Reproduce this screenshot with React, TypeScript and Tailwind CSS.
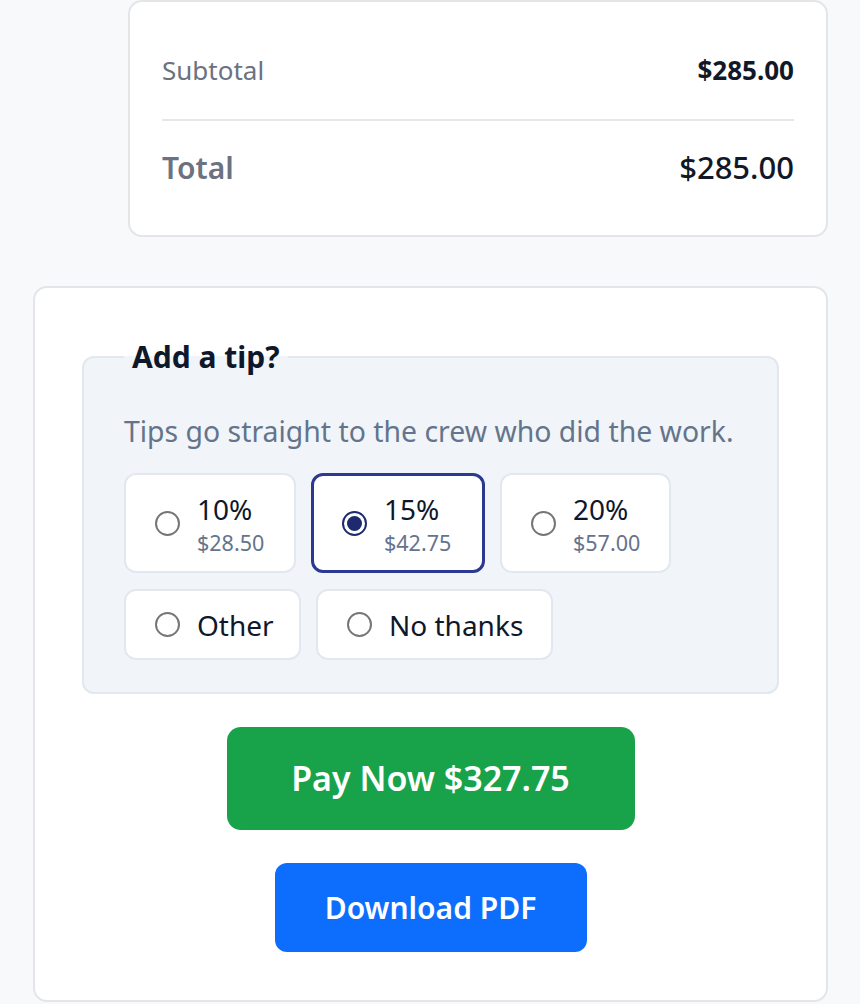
import React, { useState } from "react";

type Opt = { id: string; label: string; amount?: string; w: string; h: string };

const opts: Opt[] = [
  { id: "10", label: "10%", amount: "$28.50", w: "w-[172px]", h: "h-[100px]" },
  { id: "15", label: "15%", amount: "$42.75", w: "w-[174px]", h: "h-[100px]" },
  { id: "20", label: "20%", amount: "$57.00", w: "w-[171px]", h: "h-[100px]" },
  { id: "other", label: "Other", w: "w-[177px]", h: "h-[71px]" },
  { id: "none", label: "No thanks", w: "w-[237px]", h: "h-[71px]" },
];

function Radio({ checked }: { checked: boolean }) {
  return checked ? (
    <span className="flex h-[25px] w-[25px] shrink-0 items-center justify-center rounded-full border-2 border-[#1e2a6e] bg-white">
      <span className="h-[15px] w-[15px] rounded-full bg-[#1e2a6e]" />
    </span>
  ) : (
    <span className="h-[25px] w-[25px] shrink-0 rounded-full border-2 border-[#767676] bg-white" />
  );
}

export default function App() {
  const [sel, setSel] = useState("15");
  return (
    <div
      className="min-h-screen bg-[#f8f9fb]"
      style={{ fontFamily: '"Noto Sans", "Open Sans", sans-serif' }}
    >
      <div className="ml-[128px] w-[700px] rounded-[14px] border-2 border-[#e3e5e9] bg-white px-[32px] pt-[44px] pb-[44px]">
        <div className="flex h-[48px] items-center justify-between">
          <span className="text-[26px] text-[#6b7280]">Subtotal</span>
          <span className="text-[26px] font-bold text-[#111827]">$285.00</span>
        </div>
        <div className="mt-[25px] h-[2px] bg-[#e5e7eb]" />
        <div className="mt-[22px] flex h-[48px] items-center justify-between">
          <span className="text-[30px] font-semibold text-[#6b7280]">Total</span>
          <span className="text-[31px] font-medium text-[#111827]">$285.00</span>
        </div>
      </div>

      <div className="ml-[33px] mt-[49px] w-[795px] rounded-[14px] border-2 border-[#e3e5e9] bg-white px-[47px] pt-[51px] pb-[48px]">
        <fieldset className="rounded-[12px] border-2 border-[#e2e8f0] bg-[#f1f4f9] px-[40px] pb-[32px]">
          <legend className="px-[8px] text-[30px] font-bold leading-[36px] text-[#0f172a]">
            Add a tip?
          </legend>
          <p className="mt-[38px] text-[28.4px] leading-[36px] text-[#64748b]">
            Tips go straight to the crew who did the work.
          </p>
          <div className="mt-[24px] flex flex-wrap gap-x-[15px] gap-y-[16px]">
            {opts.map((o) => {
              const checked = sel === o.id;
              return (
                <button
                  key={o.id}
                  type="button"
                  onClick={() => setSel(o.id)}
                  className={`${o.w} ${o.h} flex items-center gap-[17px] rounded-[12px] bg-white text-left ${
                    checked
                      ? "border-[3px] border-[#2b3990] pl-[28px]"
                      : "border-2 border-[#e2e8f0] pl-[29px]"
                  }`}
                >
                  <Radio checked={checked} />
                  {o.amount ? (
                    <span className="flex flex-col pt-[6px]">
                      <span className="text-[28px] leading-[33px] text-[#0f172a]">{o.label}</span>
                      <span className="text-[21.5px] leading-[33px] text-[#64748b]">{o.amount}</span>
                    </span>
                  ) : (
                    <span className="text-[28px] leading-[34px] text-[#0f172a]">{o.label}</span>
                  )}
                </button>
              );
            })}
          </div>
        </fieldset>

        <div className="mt-[33px] flex flex-col items-center gap-[33px]">
          <button
            type="button"
            className="flex h-[103px] w-[408px] items-center justify-center rounded-[14px] bg-[#18a34a] text-[34px] font-semibold text-white"
          >
            Pay Now $327.75
          </button>
          <button
            type="button"
            className="flex h-[89px] w-[312px] items-center justify-center rounded-[12px] bg-[#0d6efd] text-[30px] font-semibold text-white"
          >
            Download PDF
          </button>
        </div>
      </div>
    </div>
  );
}
